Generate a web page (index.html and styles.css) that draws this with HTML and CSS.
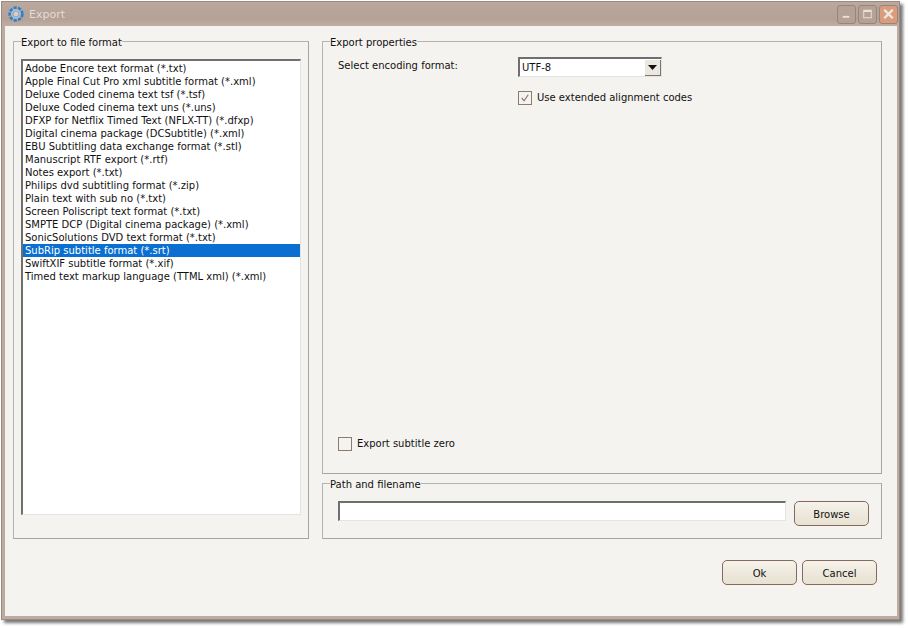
FILE: index.html
```html
<!DOCTYPE html>
<html lang="en">
<head>
<meta charset="utf-8">
<title>Export</title>
<link rel="stylesheet" href="styles.css">
</head>
<body>
<div class="window">
  <header class="titlebar">
    <svg class="app-icon" viewBox="0 0 18 18" width="18" height="18">
      <circle cx="9" cy="9" r="6" fill="none" stroke="#2f7fd0" stroke-width="3.4" stroke-dasharray="3 1.2"/>
      <circle cx="9" cy="9" r="4.2" fill="none" stroke="#9cc8ee" stroke-width="1.4"/>
      <circle cx="9" cy="9" r="2.2" fill="#d9cfc8"/>
    </svg>
    <span class="title">Export</span>
    <div class="caption-buttons">
      <button class="cap"><svg viewBox="0 0 18 18" width="18" height="18"><rect x="5" y="11" width="7" height="2" fill="#e8e2dc"/></svg></button>
      <button class="cap"><svg viewBox="0 0 18 18" width="18" height="18"><path d="M4.5 4.500h9v9h-9z M5.500 7h7v5.500h-7z" fill="#e8e2dc" fill-rule="evenodd"/></svg></button>
      <button class="cap cap-close"><svg viewBox="0 0 18 18" width="18" height="18"><path d="M4.500 4.500L13.500 13.500M13.500 4.500L4.500 13.500" stroke="#f0e8e2" stroke-width="2.600" fill="none"/></svg></button>
    </div>
  </header>
  <main class="client">
    <div class="columns">
      <fieldset class="group group-formats">
        <legend>Export to file format</legend>
        <ul class="listbox">
          <li>Adobe Encore text format (*.txt)</li>
          <li>Apple Final Cut Pro xml subtitle format (*.xml)</li>
          <li>Deluxe Coded cinema text tsf (*.tsf)</li>
          <li>Deluxe Coded cinema text uns (*.uns)</li>
          <li>DFXP for Netflix Timed Text (NFLX-TT) (*.dfxp)</li>
          <li>Digital cinema package (DCSubtitle) (*.xml)</li>
          <li>EBU Subtitling data exchange format (*.stl)</li>
          <li>Manuscript RTF export (*.rtf)</li>
          <li>Notes export (*.txt)</li>
          <li>Philips dvd subtitling format (*.zip)</li>
          <li>Plain text with sub no (*.txt)</li>
          <li>Screen Poliscript text format (*.txt)</li>
          <li>SMPTE DCP (Digital cinema package) (*.xml)</li>
          <li>SonicSolutions DVD text format (*.txt)</li>
          <li class="selected">SubRip subtitle format (*.srt)</li>
          <li>SwiftXIF subtitle format (*.xif)</li>
          <li>Timed text markup language (TTML xml) (*.xml)</li>
        </ul>
      </fieldset>
      <div class="right">
        <fieldset class="group group-props">
          <legend>Export properties</legend>
          <div class="encoding-row">
            <span class="label">Select encoding format:</span>
            <div class="combo">
              <span class="combo-value">UTF-8</span>
              <span class="combo-btn"><svg viewBox="0 0 9 5" width="9" height="5"><path d="M0 0h9L4.500 5z" fill="#111"/></svg></span>
            </div>
          </div>
          <label class="check check-align">
            <span class="box"><svg viewBox="0 0 13 13" width="12" height="12"><path d="M3 6.500L5.500 9.500L10 3" stroke="#8a7a70" stroke-width="1.300" fill="none"/></svg></span>
            <span class="check-text">Use extended alignment codes</span>
          </label>
          <label class="check check-zero">
            <span class="box"></span>
            <span class="check-text">Export subtitle zero</span>
          </label>
        </fieldset>
        <fieldset class="group group-path">
          <legend>Path and filename</legend>
          <div class="path-row">
            <div class="textbox"></div>
            <button class="btn">Browse</button>
          </div>
        </fieldset>
      </div>
    </div>
    <footer class="actions">
      <button class="btn">Ok</button>
      <button class="btn">Cancel</button>
    </footer>
  </main>
</div>
</body>
</html>
```
FILE: styles.css
```css
* { box-sizing: border-box; }
html, body { margin: 0; height: 100%; background: #fff; }
body {
  font-family: "DejaVu Sans", "Noto Sans", sans-serif;
  font-size: 10px;
  color: #111;
  padding: 1px 0 0 1px;
}
.window {
  width: 899px;
  height: 619px;
  display: flex;
  flex-direction: column;
  background: #bdaaa0;
  border: 1px solid #9a8a80;
  box-shadow: 3px 3px 3px #777;
  padding: 0 2px 3px 3px;
}
.titlebar {
  height: 24px;
  flex: none;
  display: flex;
  align-items: center;
  background: linear-gradient(#bba89e, #b5a196 70%, #c0aea4);
  margin: 0 -2px 0 -3px;
  padding: 0 1px 0 5px;
}
.app-icon { flex: none; }
.title {
  margin-left: 4px;
  font-size: 11px;
  color: #e2dcd6;
}
.caption-buttons { margin-left: auto; display: flex; gap: 2px; }
.cap {
  width: 19px;
  height: 19px;
  padding: 0;
  display: flex;
  align-items: center;
  justify-content: center;
  background: #b5a196;
  border: 1px solid #97847a;
  border-radius: 3px;
}
.cap-close { background: #d99c7c; }
.client {
  flex: 1;
  display: flex;
  flex-direction: column;
  background: #f5f3ef;
  padding: 15px 15px 0 8px;
}
.columns { display: flex; gap: 13px; height: 498px; flex: none; }
.group {
  margin: 0;
  min-width: 0;
  border: 1px solid #a5a5a5;
  border-top-color: #b4b4b4;
  border-left-color: #b4b4b4;
}
.group legend {
  padding: 3px 0 0;
  line-height: 12px;
}
.group-formats {
  width: 296px;
  padding: 10px 7px 0 7px;
  margin-top: -7px;
  height: 505px;
}
.listbox {
  list-style: none;
  margin: 0;
  padding: 1px 0 0 0;
  height: 456px;
  background: #fff;
  border-style: solid;
  border-width: 2px 1px 1px 2px;
  border-color: #6f6f6f #e3e3e3 #e3e3e3 #6f6f6f;
}
.listbox li {
  height: 13px;
  line-height: 13px;
  padding-left: 2px;
  white-space: nowrap;
}
.listbox .selected { background: #0a6fd0; color: #fff; }
.right { flex: 1; display: flex; flex-direction: column; gap: 9px; min-width: 0; }
.group-props {
  height: 440px;
  margin-top: -7px;
  padding: 8px 15px 0 7px;
}
.group-path { height: 63px; margin-top: -7px; padding: 10px 12px 0 7px; }
.encoding-row { display: flex; align-items: flex-start; margin-left: 8px; }
.label { width: 180px; line-height: 13px; padding-top: 2px; height: 15px; }
.combo {
  width: 144px;
  height: 20px;
  display: flex;
  align-items: center;
  background: #fff;
  border-style: solid;
  border-width: 2px 1px 1px 2px;
  border-color: #6f6f6f #e3e3e3 #e3e3e3 #6f6f6f;
}
.combo-value { flex: 1; padding-left: 2px; }
.combo-btn {
  width: 16px;
  height: 16px;
  display: flex;
  align-items: center;
  justify-content: center;
  background: #ece8e0;
  border-right: 1px solid #777;
  border-bottom: 1px solid #777;
}
.check { display: flex; align-items: center; gap: 5px; line-height: 14px; }
.check-text { padding-top: 1px; }
.box {
  width: 14px;
  height: 14px;
  flex: none;
  display: flex;
  align-items: center;
  justify-content: center;
  background: #f5f3ef;
  border: 1px solid #8a7a70;
}
.check-align { margin: 13px 0 0 188px; }
.check-zero { margin: 331px 0 0 8px; }
.path-row { display: flex; gap: 8px; align-items: flex-start; margin-left: 8px; }
.textbox {
  width: 448px;
  height: 20px;
  background: #fff;
  border-style: solid;
  border-width: 2px 1px 1px 2px;
  border-color: #6f6f6f #e3e3e3 #e3e3e3 #6f6f6f;
}
.btn {
  width: 75px;
  height: 25px;
  padding: 1px 0 0;
  font: inherit;
  color: #111;
  border: 1px solid #86695c;
  border-radius: 5px;
  background: linear-gradient(#f6f3ec, #ece7da 60%, #e8e2d2);
}
.actions { display: flex; justify-content: flex-end; gap: 5px; margin-top: 21px; padding-right: 5px; }
```
